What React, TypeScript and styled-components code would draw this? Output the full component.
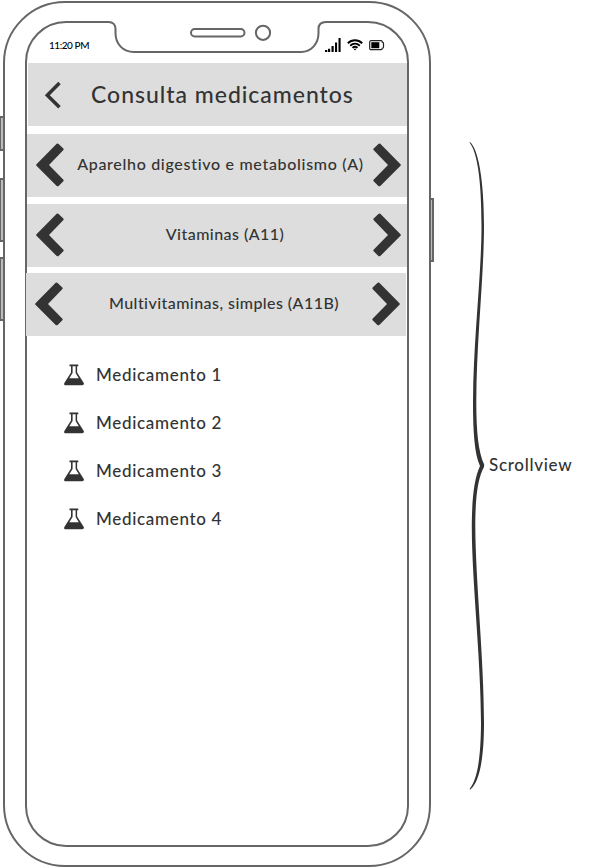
import React from "react";
import styled, { createGlobalStyle } from "styled-components";

const INK = "#333333";
const FRAME = "#666666";
const BAR = "#dddddd";

const GlobalStyle = createGlobalStyle`
  *, *::before, *::after { box-sizing: border-box; }
  body {
    margin: 0;
    background: #ffffff;
    color: ${INK};
    font-family: "Lato", "Open Sans", sans-serif;
    font-weight: 500;
  }
  svg { display: block; flex: none; }
`;

const Board = styled.main`
  display: flex;
  align-items: flex-start;
  width: 602px;
  height: 867px;
  padding: 1px 0 0 3px;
  overflow: hidden;
`;

const Phone = styled.section`
  position: relative;
  flex: none;
  width: 428px;
  height: 866px;
  padding: 18px 20px;
  border: 2px solid ${FRAME};
  border-radius: 62px;
`;

const SideButton = styled.span<{ $side: "left" | "right"; $top: number; $height: number }>`
  position: absolute;
  ${(p) => p.$side}: -5px;
  top: ${(p) => p.$top}px;
  width: 4px;
  height: ${(p) => p.$height}px;
  border: 2px solid ${FRAME};
  border-${(p) => p.$side}-width: ${(p) => (p.$side === "left" ? 1 : 2)}px;
  border-${(p) => (p.$side === "left" ? "right" : "left")}-width: 1px;
  background: #bbbbbb;
`;

const Screen = styled.div`
  position: relative;
  width: 384px;
  height: 826px;
  border: 2px solid ${FRAME};
  border-radius: 41px;
`;

const Notch = styled.svg`
  position: absolute;
  left: 80px;
  top: -2px;
`;

const StatusBar = styled.header`
  display: flex;
  align-items: center;
  justify-content: space-between;
  height: 40px;
  padding: 4px 22px 0 22px;
  color: #000000;
`;

const Clock = styled.time`
  font-size: 10px;
  line-height: 12px;
  letter-spacing: -0.45px;
`;

const StatusIcons = styled.div`
  display: flex;
  align-items: center;
  gap: 6px;
`;

const Bar = styled.div<{ $shift?: number; $gap?: number }>`
  display: flex;
  align-items: center;
  height: 63px;
  width: 380px;
  margin-top: ${(p) => p.$gap ?? 0}px;
  margin-left: ${(p) => p.$shift ?? 0}px;
  background: ${BAR};
`;

const TitleBar = styled(Bar)`
  width: 379px;
  padding-left: 16px;
`;

const Title = styled.h1`
  margin: 0 0 2px 29px;
  font-size: 23px;
  font-weight: 500;
  line-height: 28px;
  letter-spacing: 0.97px;
  white-space: nowrap;
`;

const PickerBar = styled(Bar)`
  justify-content: space-between;
  padding: 0 6px 2px 9px;
`;

const PickerLabel = styled.span<{ $track: number; $indent: number }>`
  margin-bottom: 2px;
  padding-left: ${(p) => p.$indent}px;
  font-size: 16px;
  line-height: 20px;
  letter-spacing: ${(p) => p.$track}px;
  white-space: nowrap;
`;

const List = styled.ul`
  margin: 15px 0 0;
  padding: 0 0 0 37px;
  list-style: none;
`;

const Item = styled.li`
  display: flex;
  align-items: center;
  gap: 12px;
  height: 48px;
`;

const ItemName = styled.span`
  font-size: 17px;
  line-height: 20px;
  letter-spacing: 0.68px;
  white-space: nowrap;
`;

const Annotation = styled.aside`
  display: flex;
  align-items: center;
  height: 652px;
  margin: 138px 0 0 36px;
`;

const Note = styled.span`
  margin-left: 2px;
  font-size: 17px;
  line-height: 20px;
  letter-spacing: 0.7px;
`;

const NotchShape = () => (
  <Notch width="220" height="34" viewBox="107 21 220 34" fill="none">
    <path d="M108.500 20H326V24H108.500Z" fill="#ffffff" />
    <path
      d="M107 22H108.500C113 22 115.500 25 115.500 29V33C115.500 44 123 52 134 52H301C311 52 318.500 44 318.500 33V29C318.500 25 321 22 326 22H327"
      stroke={FRAME}
      strokeWidth="2"
    />
    <rect x="191" y="29" width="53.500" height="7.500" rx="3.700" stroke={FRAME} strokeWidth="2" />
    <circle cx="263" cy="32.800" r="7.100" stroke={FRAME} strokeWidth="2" />
  </Notch>
);

const SignalIcon = () => (
  <svg width="17" height="15" viewBox="0 0 17 15" fill="#000000">
    <path d="M1 12h2.300v2H1ZM4 10.700h2.200V14H4ZM7.500 8h2.200v6H7.500ZM11 4.500h2.100V14H11ZM14.500 0h2.100v14h-2.100Z" />
  </svg>
);

const WifiIcon = () => (
  <svg width="16" height="12" viewBox="0 0 16 12" fill="none" stroke="#000000" strokeWidth="1.900">
    <path d="M.8 4.300C5 .3 11 .3 15.200 4.300M3.200 6.700C6 4 10 4 12.800 6.700M5.500 8.900C7 7.500 9 7.500 10.500 8.900" />
    <path d="M6.500 9.800h3L8 11.600Z" fill="#000000" stroke="none" />
  </svg>
);

const BatteryIcon = () => (
  <svg width="16" height="11" viewBox="0 0 16 11" fill="none">
    <path
      d="M2 .7h10c.9 0 1.300.6 1.300 1.500.8 0 1.200.4 1.200 1.200v3.700c0 .8-.4 1.200-1.200 1.200 0 .9-.4 1.400-1.300 1.400H2C1.200 9.700.7 9.200.7 8.300V2.100C.7 1.200 1.200.7 2 .7Z"
      stroke="#222222"
      strokeWidth="1.200"
    />
    <path d="M2.300 2.200h8v6h-8Z" fill="#000000" />
  </svg>
);

const BackIcon = () => (
  <svg width="18" height="28" viewBox="0 0 18 28" fill="none">
    <path d="M15.500 2 3.300 14.300l12.200 12" stroke={INK} strokeWidth="3.500" />
  </svg>
);

const Chevron = ({ flip = false }: { flip?: boolean }) => (
  <svg width="28" height="44" viewBox="0 0 28 44" fill={INK}>
    <path
      transform={flip ? "translate(28 0) scale(-1 1)" : undefined}
      d="M20.700.8Q21.700.1 22.600 1L27.100 5.300Q28.200 6.300 27.200 7.300L13 22 27.200 36.500Q28.200 37.600 27.100 38.600L22.600 42.900Q21.700 43.700 20.700 42.900L.5 22.800Q-.2 22 .5 21.200Z"
    />
  </svg>
);

const FlaskIcon = () => (
  <svg width="20" height="22" viewBox="0 0 20 22">
    <path d="M5.500.5h8.800v1.700h-1.200v6.300l6.500 10.200c.9 1.500.1 2.600-1.500 2.600H1.900C.3 21.300-.4 20.200.5 18.700L7 8.500V2.200H5.500Z" fill={INK} />
    <path d="M8.600 2.200h3v6.700l3.200 5.300H5.300l3.300-5.300Z" fill="#ffffff" />
  </svg>
);

const Brace = () => (
  <svg width="20" height="652" viewBox="467 139 20 652" fill={INK}>
    <path d="M470 142C478 149 484 178 484 226C484 275 476.500 340 476.300 402C476.300 432 478.500 453 484.200 464.500L484 467C478 478 475.300 496 475.300 526C475.500 580 484 660 484 723C484 756 480 782 470.300 789.500L469.500 789C477 780 480.800 760 481 723C481 660 471.700 580 471.800 526C472 496 474.500 478 480 466C474.500 454 473 432 473 402C473.300 340 481.500 275 481.500 226C481.500 178 477 152 469.500 142.500Z" />
  </svg>
);

const pickers = [
  { label: "Aparelho digestivo e metabolismo (A)", gap: 8, shift: 0, track: 0.69, indent: 4 },
  { label: "Vitaminas (A11)", gap: 7, shift: 0, track: 0.45, indent: 13 },
  { label: "Multivitaminas, simples (A11B)", gap: 6, shift: -1, track: 0.44, indent: 13 },
];

const medicines = ["Medicamento 1", "Medicamento 2", "Medicamento 3", "Medicamento 4"];

export default function App() {
  return (
    <>
      <GlobalStyle />
      <Board>
        <Phone>
          <SideButton $side="left" $top={113} $height={35} />
          <SideButton $side="left" $top={175} $height={64} />
          <SideButton $side="left" $top={254} $height={64} />
          <SideButton $side="right" $top={195} $height={64} />
          <Screen>
            <NotchShape />
            <StatusBar>
              <Clock>11:20 PM</Clock>
              <StatusIcons>
                <SignalIcon />
                <WifiIcon />
                <BatteryIcon />
              </StatusIcons>
            </StatusBar>
            <TitleBar $shift={1}>
              <BackIcon />
              <Title>Consulta medicamentos</Title>
            </TitleBar>
            {pickers.map((p) => (
              <PickerBar key={p.label} $gap={p.gap} $shift={p.shift}>
                <Chevron />
                <PickerLabel $track={p.track} $indent={p.indent}>{p.label}</PickerLabel>
                <Chevron flip />
              </PickerBar>
            ))}
            <List>
              {medicines.map((name) => (
                <Item key={name}>
                  <FlaskIcon />
                  <ItemName>{name}</ItemName>
                </Item>
              ))}
            </List>
          </Screen>
        </Phone>
        <Annotation>
          <Brace />
          <Note>Scrollview</Note>
        </Annotation>
      </Board>
    </>
  );
}
